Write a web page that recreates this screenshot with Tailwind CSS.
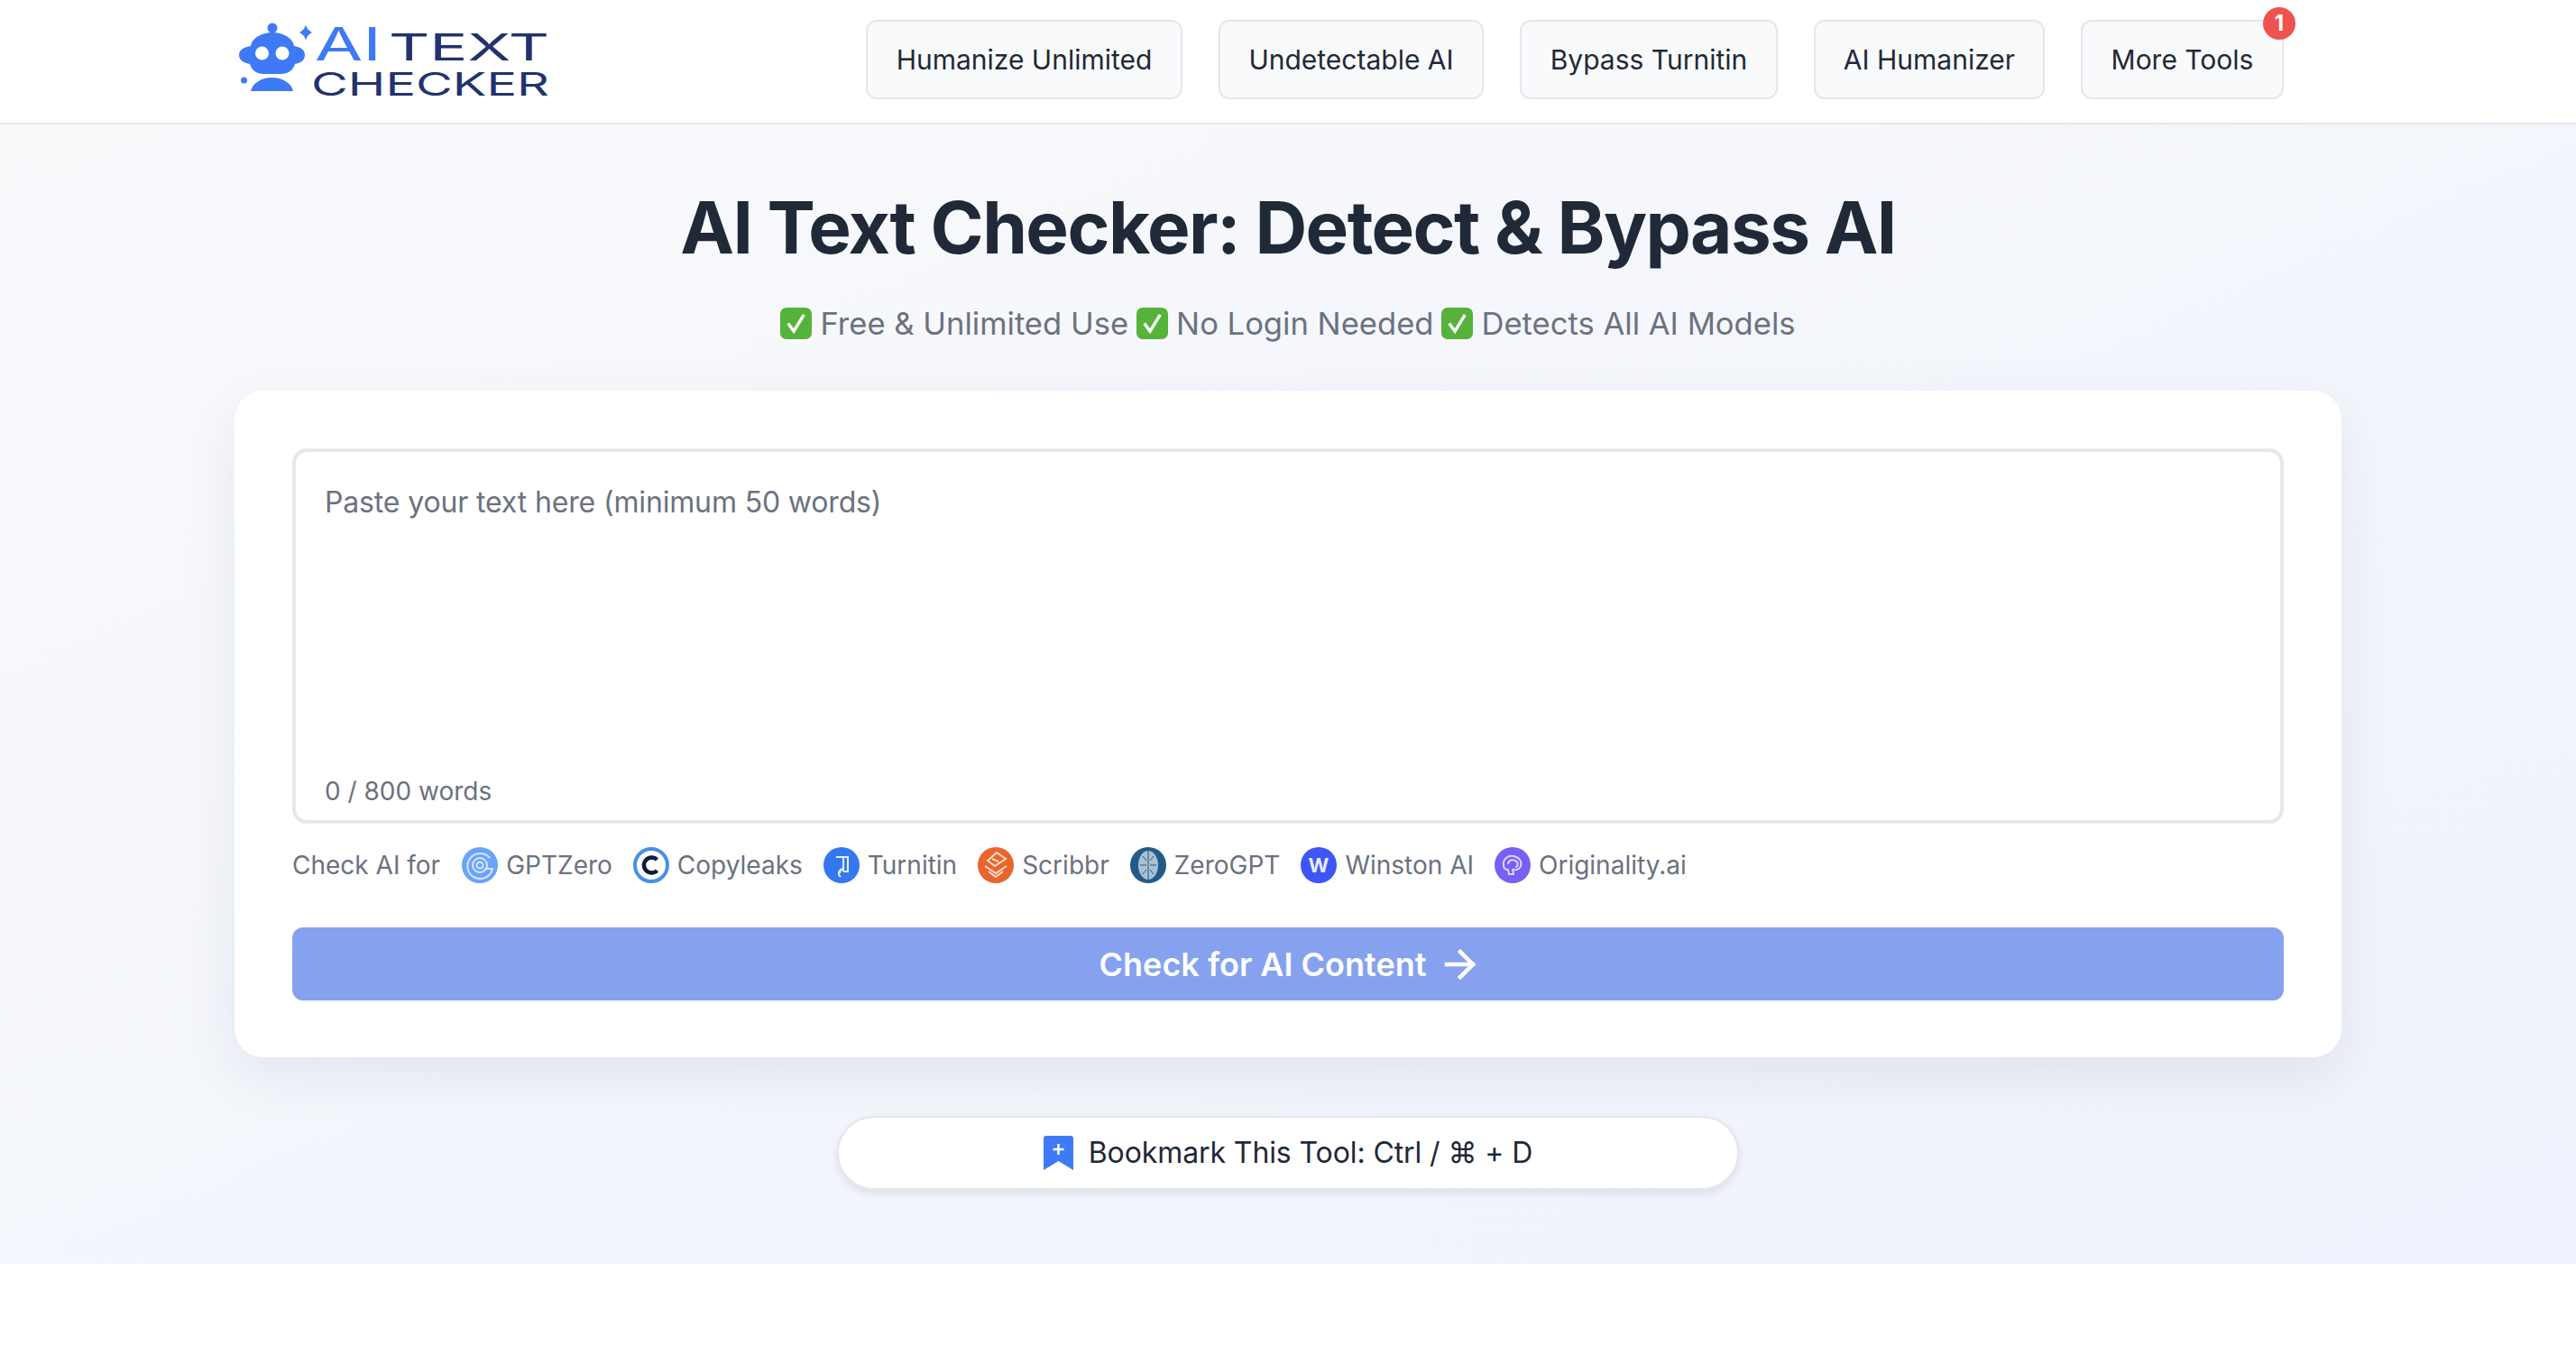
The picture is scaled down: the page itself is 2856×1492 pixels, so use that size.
<!DOCTYPE html>
<html lang="en">
<head>
  <meta charset="UTF-8" />
  <title>AI Text Checker</title>
  <script src="https://cdn.jsdelivr.net/npm/@tailwindcss/browser@4"></script>
</head>
<body class="bg-white font-['Inter',sans-serif] text-[#1f2937] min-h-screen">
  <!-- header -->
  <header class="h-[138px] bg-white border-b-2 border-[#e5e7eb] pl-[260px] pr-[324px] flex items-center justify-between">
    <a href="#" class="block w-[350px] h-[110px] -mt-[2px]">
      <svg width="350" height="110" viewBox="260 12 350 110" fill="#3f7af6">
        <circle cx="302" cy="31" r="5.500"/>
        <path d="M299.500 34h5v6h-5z"/>
        <path d="M339 27.500c1.500 4.500 3.500 6.500 7 8.500-3.500 2-5.500 4-7 8.500-1.500-4.500-3.500-6.500-7-8.500 3.500-2 5.500-4 7-8.500z"/>
        <path d="M278 51c1-8 11-15 24-15s23 7 24 15c7 1 12 4 12 10s-5 9-11 10c-2 7-8 11-15 11h-20c-7 0-13-4-15-11-6-1-12-4-12-10s6-9 13-10z"/>
        <circle cx="290.500" cy="59" r="7.500" fill="#fff"/>
        <circle cx="313" cy="59" r="7.500" fill="#fff"/>
        <circle cx="270.500" cy="89" r="3.500"/>
        <path d="M278 101c2-9 12-15 23.500-15s21.500 6 23.500 15z"/>
        <text x="349" y="67" font-family="Inter" font-size="51" font-weight="400" textLength="74" lengthAdjust="spacingAndGlyphs">AI</text>
        <text x="431" y="67" font-family="Inter" font-size="41" font-weight="400" fill="#22326f" textLength="178" lengthAdjust="spacingAndGlyphs">TEXT</text>
        <text x="345" y="106" font-family="Inter" font-size="36" font-weight="400" fill="#22326f" textLength="264" lengthAdjust="spacingAndGlyphs">CHECKER</text>
      </svg>
    </a>
    <nav class="flex items-center gap-10 -mt-[4px] text-[30px] leading-none text-[#1f2937]">
      <a href="#" class="h-[88px] w-[351px] flex items-center justify-center rounded-xl border-2 border-[#e5e7eb] bg-[#f9fafb]">Humanize Unlimited</a>
      <a href="#" class="h-[88px] w-[294px] flex items-center justify-center rounded-xl border-2 border-[#e5e7eb] bg-[#f9fafb]">Undetectable AI</a>
      <a href="#" class="h-[88px] w-[286px] flex items-center justify-center rounded-xl border-2 border-[#e5e7eb] bg-[#f9fafb]">Bypass Turnitin</a>
      <a href="#" class="h-[88px] w-[256px] flex items-center justify-center rounded-xl border-2 border-[#e5e7eb] bg-[#f9fafb]">AI Humanizer</a>
      <a href="#" class="relative h-[88px] w-[225px] flex items-center justify-center rounded-xl border-2 border-[#e5e7eb] bg-[#f9fafb]">
        More Tools
        <span class="absolute -top-[16px] -right-[15px] w-9 h-9 rounded-full bg-[#ef5350] text-white text-[24px] font-bold flex items-center justify-center">1</span>
      </a>
    </nav>
  </header>

  <main class="h-[1263px] bg-gradient-to-br from-[#f9fafc] to-[#eef2fc] px-[260px] pt-[64px]">
    <h1 class="text-[80px] leading-[100px] font-bold tracking-[-1.6px] text-center text-[#1f2937]">AI Text Checker: Detect &amp; Bypass AI</h1>
    <p class="mt-[34px] h-[44px] flex items-center justify-center gap-[9px] text-[34.6px] leading-[44px] text-[#6b7280]">
      <svg width="35" height="35" viewBox="0 0 36 36"><rect width="36" height="36" rx="7" fill="#55b33a"/><path d="M9 18l6.500 9L27 8" fill="none" stroke="#fff" stroke-width="3.500"/></svg>
      <span>Free &amp; Unlimited Use</span>
      <svg width="35" height="35" viewBox="0 0 36 36"><rect width="36" height="36" rx="7" fill="#55b33a"/><path d="M9 18l6.500 9L27 8" fill="none" stroke="#fff" stroke-width="3.500"/></svg>
      <span>No Login Needed</span>
      <svg width="35" height="35" viewBox="0 0 36 36"><rect width="36" height="36" rx="7" fill="#55b33a"/><path d="M9 18l6.500 9L27 8" fill="none" stroke="#fff" stroke-width="3.500"/></svg>
      <span>Detects All AI Models</span>
    </p>

    <!-- card -->
    <section class="mt-[53px] h-[739px] bg-white rounded-[32px] p-[64px] shadow-[0_20px_60px_rgba(31,41,55,0.08)]">
      <div class="relative h-[416px]">
        <textarea class="w-full h-full resize-none rounded-2xl border-4 border-[#e5e7eb] bg-white px-8 py-[32px] text-[32px] tracking-[-0.15px] leading-[48px] placeholder:text-[#6b7280] outline-none" placeholder="Paste your text here (minimum 50 words)"></textarea>
        <span class="absolute left-9 bottom-[16px] text-[28px] leading-[40px] text-[#6b7280]">0 / 800 words</span>
      </div>
      <div class="mt-[26px] h-[40px] flex items-center gap-[23px] text-[28px] leading-[40px] text-[#6b7280]">
        <span class="mr-[1px]">Check AI for</span>
        <span class="flex items-center gap-[9px]">
          <svg width="40" height="40" viewBox="0 0 40 40"><circle cx="20" cy="20" r="20" fill="#6aa3f8"/><g fill="none" stroke="#d6e6fd" stroke-width="2"><path d="M31 12a14 14 0 1 0 3 12h-9"/><circle cx="20" cy="20" r="8"/><circle cx="20" cy="20" r="3.500"/></g></svg>
          GPTZero
        </span>
        <span class="flex items-center gap-[9px]">
          <svg width="40" height="40" viewBox="0 0 40 40"><circle cx="20" cy="20" r="18" fill="#fff" stroke="#4a90e8" stroke-width="4"/><path d="M26.500 14a8.500 8.500 0 1 0 0 12" fill="none" stroke="#0f1b3d" stroke-width="4.500"/></svg>
          Copyleaks
        </span>
        <span class="flex items-center gap-[9px]">
          <svg width="40" height="40" viewBox="0 0 40 40"><circle cx="20" cy="20" r="20" fill="#3478f0"/><path d="M14 11h13v16h-5M22 11v14M19 33c-3-2-3-6 0-8l-1 4m1-4l4 1" fill="none" stroke="#e4eefe" stroke-width="2"/></svg>
          Turnitin
        </span>
        <span class="flex items-center gap-[9px]">
          <svg width="40" height="40" viewBox="0 0 40 40"><circle cx="20" cy="20" r="20" fill="#e8652d"/><path d="M21 6l10 7-12 8-8-6zM16 13l7 3M8 21l12 8 12-8M12 27l8 6 8-6" fill="none" stroke="#fbdccb" stroke-width="2"/></svg>
          Scribbr
        </span>
        <span class="flex items-center gap-[9px]">
          <svg width="40" height="40" viewBox="0 0 40 40"><circle cx="20" cy="20" r="20" fill="#235a86"/><ellipse cx="20" cy="20" rx="11" ry="16" fill="#a9c1d2"/><path d="M20 4v32M14 10l4 5M26 10l-4 5M11 20h7M29 20h-7M14 30l4-5M26 30l-4-5" stroke="#235a86" stroke-width="1"/></svg>
          ZeroGPT
        </span>
        <span class="flex items-center gap-[9px]">
          <svg width="40" height="40" viewBox="0 0 40 40"><circle cx="20" cy="20" r="20" fill="#3d56f5"/><text x="20" y="28" font-family="Inter" font-size="22" font-weight="700" fill="#e8ebff" text-anchor="middle">W</text></svg>
          Winston AI
        </span>
        <span class="flex items-center gap-[9px]">
          <svg width="40" height="40" viewBox="0 0 40 40"><circle cx="20" cy="20" r="20" fill="#7660f5"/><path d="M10 20c-1-7 5-11 11-10s10 6 8 11-8 5-9 3l1 6h-5l-1-5c-3 0-5-2-5-5zM15 19c0-4 4-6 8-4s3 7 0 7" fill="none" stroke="#d9d2fd" stroke-width="2"/></svg>
          Originality.ai
        </span>
      </div>
      <button class="mt-[49px] w-full h-[81px] rounded-xl bg-[#86a2ee] text-white text-[36px] font-semibold flex items-center justify-center gap-[20px]">
        Check for AI Content
        <svg width="36" height="36" viewBox="0 0 36 36" fill="none" stroke="#fff" stroke-width="4.500" stroke-linecap="square"><path d="M3 18h29M18 4l14 14-14 14"/></svg>
      </button>
    </section>

    <div class="mt-[65px] flex justify-center">
      <button class="w-[1000px] h-[82px] rounded-full bg-white border-2 border-[#e5e7eb] shadow-[0_4px_8px_rgba(31,41,55,0.1)] flex items-center justify-center gap-[17px] text-[32px] tracking-[-0.1px] text-[#1f2937]">
        <svg width="33" height="38" viewBox="0 0 33 38"><path d="M0 3a3 3 0 0 1 3-3h27a3 3 0 0 1 3 3v35L16.500 28 0 38z" fill="#3f7af6"/><path d="M16.500 9v12M10.500 15h12" stroke="#fff" stroke-width="2.500"/></svg>
        <span>Bookmark This Tool: Ctrl / ⌘ + D</span>
      </button>
    </div>
  </main>
</body>
</html>
